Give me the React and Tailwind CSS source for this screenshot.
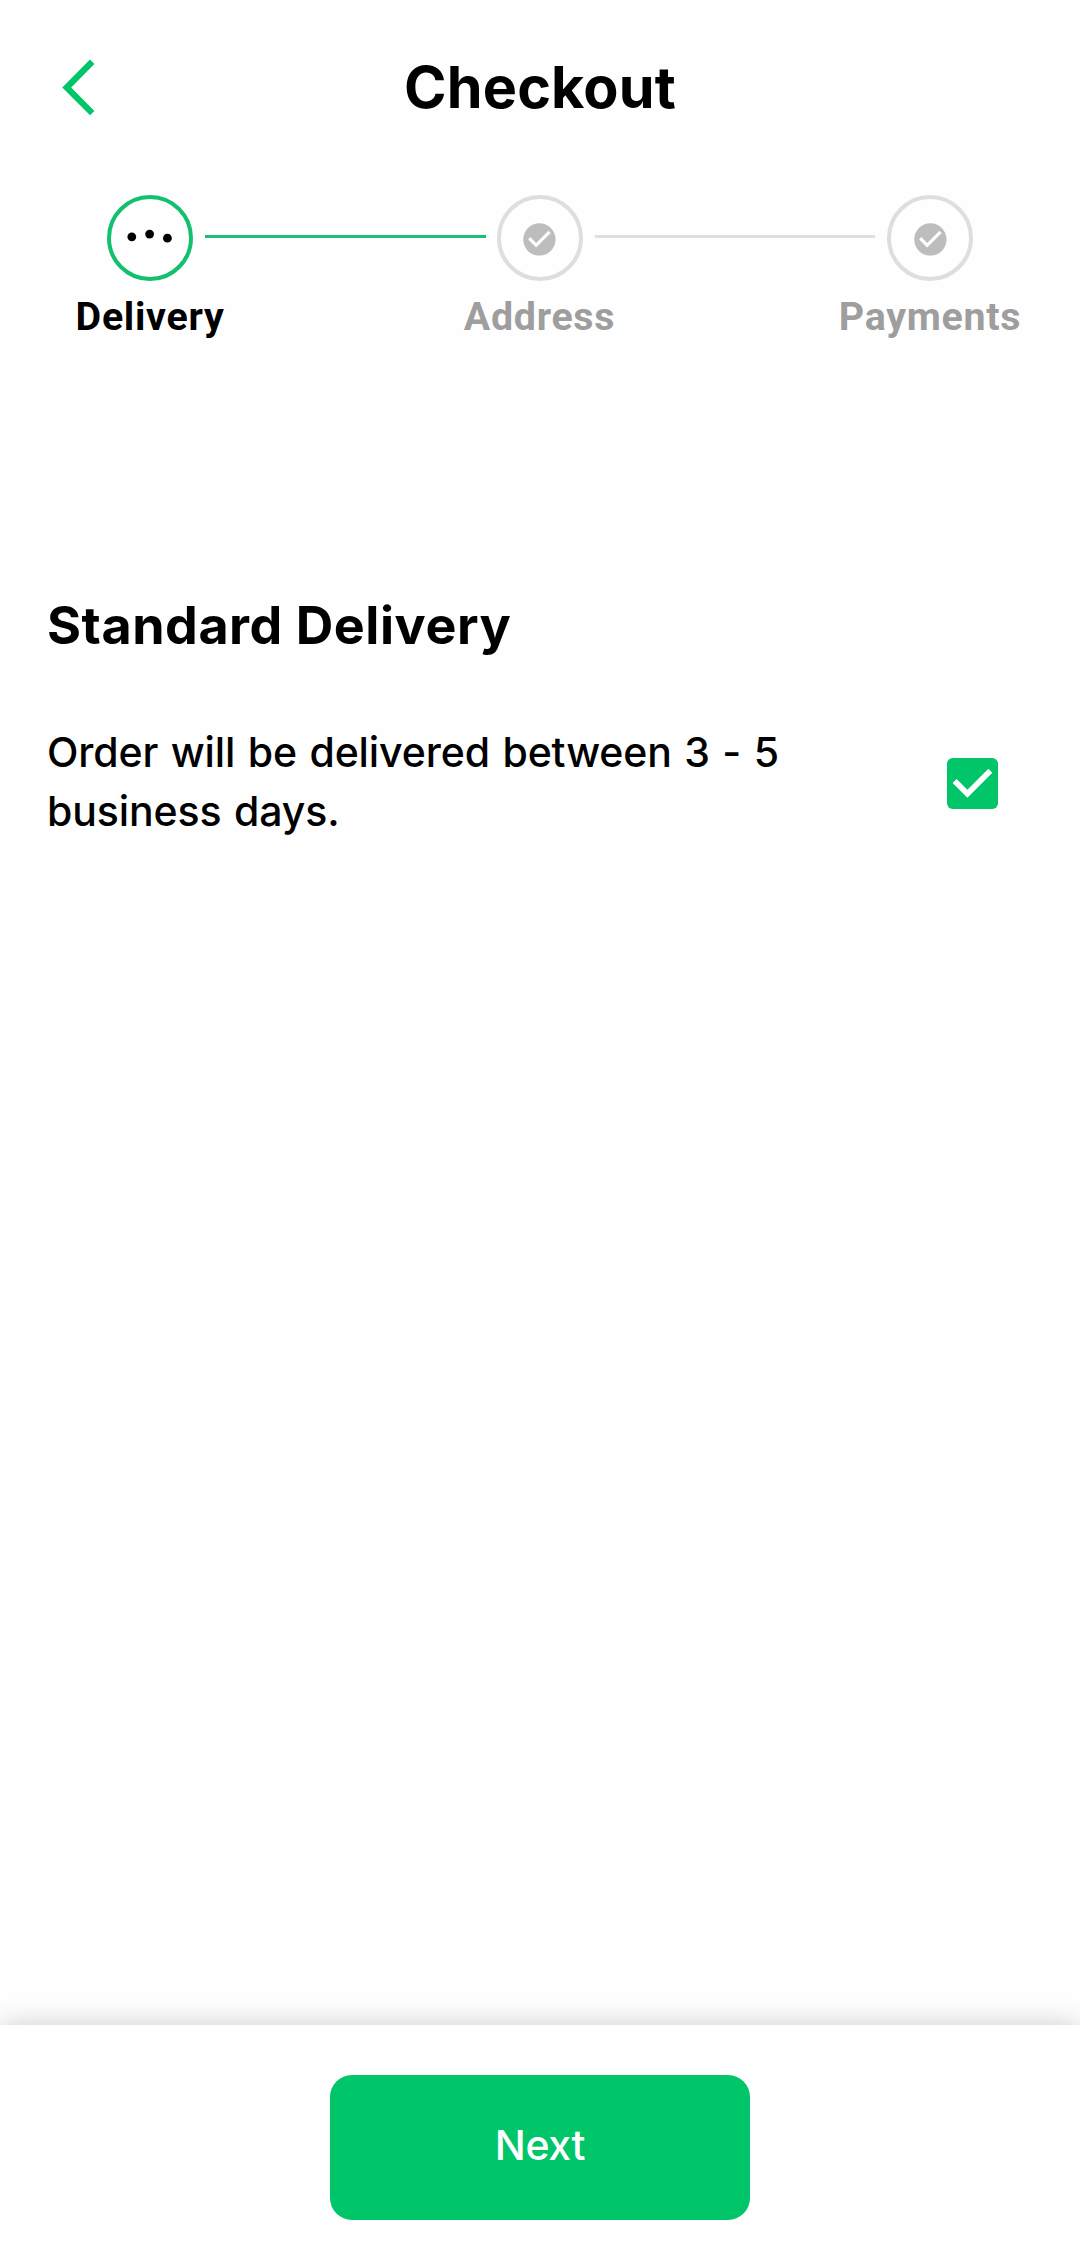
const steps = [
  { label: "Delivery", active: true },
  { label: "Address", active: false },
  { label: "Payments", active: false },
];

function BackIcon() {
  return (
    <svg className="-mt-px block h-[57px] w-[34px]" viewBox="0 0 34 57" fill="#00c569">
      <path d="M.3 28.5 28 .6 32.4 4.9 9.2 28.5 32.4 52 28 56.3z" />
    </svg>
  );
}

function DotsIcon() {
  return (
    <svg className="block h-[78px] w-[78px]" viewBox="0 0 78 78" fill="#000">
      <circle cx="20.8" cy="37.8" r="4.4" />
      <circle cx="38.6" cy="35.1" r="4.4" />
      <circle cx="56.4" cy="39.2" r="4.4" />
    </svg>
  );
}

function CheckCircleIcon() {
  return (
    <svg className="mt-[2px] block h-[38.8px] w-[38.8px]" viewBox="0 0 24 24" fill="#bdbdbd">
      <path d="M12 2C6.48 2 2 6.48 2 12s4.48 10 10 10 10-4.48 10-10S17.52 2 12 2zm-2 15l-5-5 1.41-1.41L10 14.17l7.59-7.59L19 8l-9 9z" />
    </svg>
  );
}

function Step({ label, active }) {
  return (
    <div className="flex w-[86px] flex-col items-center">
      <div
        className={
          active
            ? "flex h-[86px] w-[86px] items-center justify-center rounded-full border-4 border-[#12c16e]"
            : "flex h-[86px] w-[86px] items-center justify-center rounded-full border-4 border-[#dedede]"
        }
      >
        {active ? <DotsIcon /> : <CheckCircleIcon />}
      </div>
      <span
        className={
          active
            ? "mt-[13px] whitespace-nowrap font-['Roboto',sans-serif] text-[39.375px] font-bold leading-[46px] tracking-[0.703px] text-black"
            : "mt-[13px] whitespace-nowrap font-['Roboto',sans-serif] text-[39.375px] font-bold leading-[46px] tracking-[0.703px] text-[#9e9e9e]"
        }
      >
        {label}
      </span>
    </div>
  );
}

export default function App() {
  return (
    <div className="flex h-[2267px] w-[1080px] flex-col overflow-hidden bg-[#fefefe] font-['Inter',sans-serif] text-black">
      <header className="grid h-[176px] grid-cols-[1fr_auto_1fr] items-center px-[62px]">
        <button aria-label="Back" className="justify-self-start">
          <BackIcon />
        </button>
        <h1 className="-mt-[3px] text-[57.5px] font-bold leading-[68px] tracking-[0.15px]">Checkout</h1>
      </header>

      <nav className="mt-[19px] flex items-start px-[107px]">
        <Step {...steps[0]} />
        <div className="ml-[12px] mr-[11px] mt-[40px] h-[3px] flex-1 bg-[#1cbf73]" />
        <Step {...steps[1]} />
        <div className="ml-[12px] mr-[12px] mt-[40px] h-[3px] flex-1 bg-[#e0e0e0]" />
        <Step {...steps[2]} />
      </nav>

      <main className="flex-1 px-[47px] pt-[248px]">
        <h2 className="text-[52px] font-bold leading-[76px] tracking-[0.54px]">Standard Delivery</h2>
        <div className="mt-[59px] flex items-center justify-between pr-[35.5px]">
          <p className="w-[790px] text-[41px] font-medium leading-[59px] tracking-[-0.1px] [word-spacing:1.6px]">
            Order will be delivered between 3 - 5 business days.
          </p>
          <svg className="mt-[3px] block h-[51px] w-[51px]" viewBox="0 0 18 18">
            <rect width="18" height="18" rx="2" fill="#00c569" />
            <path d="M2.7 8.1 7.2 12.6 15.3 4.5" fill="none" stroke="#fff" strokeWidth="2" />
          </svg>
        </div>
      </main>

      <footer className="flex h-[242px] justify-center bg-white pt-[49.5px] shadow-[0_0_26px_rgba(0,0,0,0.2)]">
        <button className="h-[145.5px] w-[420px] rounded-[22px] bg-[#00c569] pb-[3px] text-[41px] font-medium tracking-[-0.3px] text-white">
          Next
        </button>
      </footer>
    </div>
  );
}
